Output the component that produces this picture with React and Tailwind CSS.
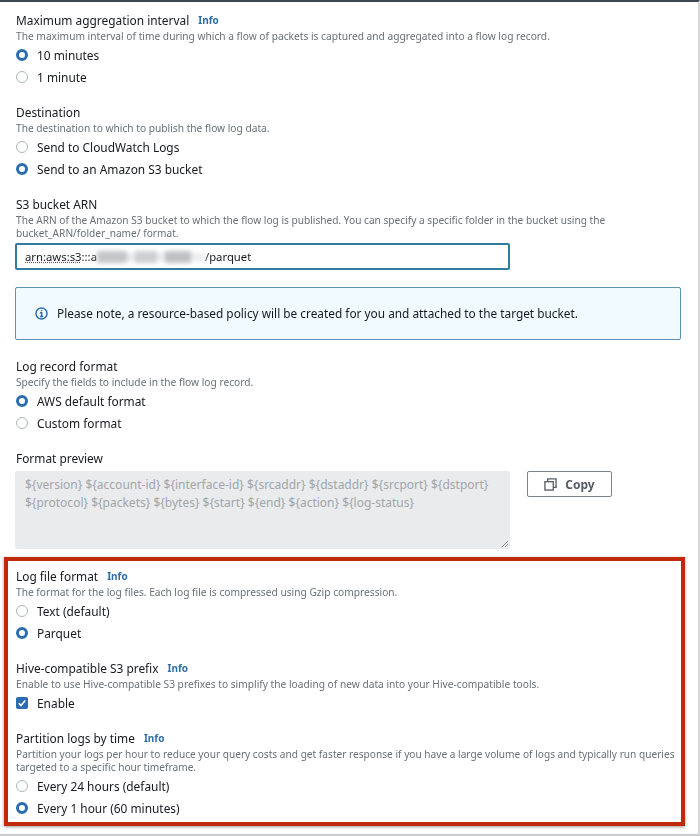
import React from "react";

const font = { fontFamily: '"Noto Sans", sans-serif' };

function Title({ children, info, className = "" }) {
  return (
    <div className={"flex items-center gap-[9px] h-4 text-[11.9px] leading-4 text-[#16191f] " + className}>
      <span>{children}</span>
      {info && <span className="text-[10px] font-bold text-[#2f6fa8]">Info</span>}
    </div>
  );
}

function Desc({ children }) {
  return <div className="h-4 text-[10.2px] leading-4 text-[#687078]">{children}</div>;
}

function Desc2({ a, b }) {
  return (
    <div className="py-[1.5px] text-[10.15px] leading-[13px] text-[#687078]">
      <div>{a}</div>
      <div>{b}</div>
    </div>
  );
}

function Radio({ label, checked }) {
  return (
    <div className="flex items-center h-[22px] text-[11.9px] text-[#16191f]">
      {checked ? (
        <span className="w-3 h-3 rounded-full border-[3.5px] border-[#2b6cb0] bg-white" />
      ) : (
        <span className="w-3 h-3 rounded-full border border-[#aab7b8] bg-white" />
      )}
      <span className="ml-[9px] pt-px">{label}</span>
    </div>
  );
}

export default function App() {
  return (
    <div
      style={font}
      className="w-[700px] h-[836px] bg-white border-t-2 border-t-[#3b4552] border-r-2 border-r-[#d5d7d9] border-b-2 border-b-[#c9cbcd] overflow-hidden"
    >
      <div className="blur-[0.35px]">
        <div className="pt-[10px] pl-4 pr-[17px]">
          <Title info>Maximum aggregation interval</Title>
          <Desc>The maximum interval of time during which a flow of packets is captured and aggregated into a flow log record.</Desc>
          <Radio checked label="10 minutes" />
          <Radio label="1 minute" />

          <Title className="mt-4">Destination</Title>
          <Desc>The destination to which to publish the flow log data.</Desc>
          <Radio label="Send to CloudWatch Logs" />
          <Radio checked label="Send to an Amazon S3 bucket" />

          <Title className="mt-4">S3 bucket ARN</Title>
          <Desc2
            a="The ARN of the Amazon S3 bucket to which the flow log is published. You can specify a specific folder in the bucket using the"
            b="bucket_ARN/folder_name/ format."
          />
          <div className="mt-[2px] -ml-px w-[495px] h-[27px] border-2 border-[#2f7c9e] rounded-[2px] flex items-center pl-2 pt-px text-[11.3px] text-[#16191f]">
            <span className="underline decoration-dotted decoration-[#d13212]">arn:aws:s3</span>
            <span>:::a</span>
            <span className="w-[108px] h-[15px] flex items-center blur-[2px]">
              <span className="w-[30px] h-3 bg-[#c4c6c8]" />
              <span className="w-[8px] h-2 bg-[#e8eaec]" />
              <span className="w-[22px] h-3 bg-[#cdcfd1]" />
              <span className="w-[8px] h-2 bg-[#e8eaec]" />
              <span className="w-[26px] h-3 bg-[#bfc1c3]" />
              <span className="w-[14px] h-2 bg-[#eceef0]" />
            </span>
            <span>/parquet</span>
          </div>

          <div className="mt-[17px] -ml-px w-[666px] h-[53px] border border-[#5f93ad] rounded-[2px] bg-[#f1faff] flex items-center pl-[19px] text-[11.85px] text-[#16191f]">
            <svg width="13" height="13" viewBox="0 0 16 16" fill="none" stroke="#2b6cb0" strokeWidth="1.8">
              <circle cx="8" cy="8" r="6.8" />
              <path d="M6.2 7.2H8.2V11.6M6.2 11.6H10" />
              <circle cx="8" cy="4.6" r="0.6" fill="#2b6cb0" strokeWidth="0.8" />
            </svg>
            <span className="ml-[9px]">Please note, a resource-based policy will be created for you and attached to the target bucket.</span>
          </div>

          <Title className="mt-[18px]">Log record format</Title>
          <Desc>Specify the fields to include in the flow log record.</Desc>
          <Radio checked label="AWS default format" />
          <Radio label="Custom format" />

          <Title className="mt-4">Format preview</Title>
          <div className="mt-[5px] -ml-px flex items-start">
            <div className="relative w-[495px] h-[78px] bg-[#eaebec] rounded-[2px] pl-[10px] pt-[5px] text-[12px] leading-[18px] text-[#a0a6ab]">
              <div>{"${version} ${account-id} ${interface-id} ${srcaddr} ${dstaddr} ${srcport} ${dstport}"}</div>
              <div>{"${protocol} ${packets} ${bytes} ${start} ${end} ${action} ${log-status}"}</div>
              <svg className="absolute right-[1px] bottom-[1px]" width="8" height="8" viewBox="0 0 8 8" stroke="#777" strokeWidth="0.8">
                <path d="M1 7L7 1M4 7L7 4" />
              </svg>
            </div>
            <div className="ml-[17px] w-[85px] h-[26px] border border-[#7d8388] rounded-[2px] bg-white flex items-center justify-center gap-[8px] pt-px text-[12px] font-bold text-[#545b64]">
              <svg width="13" height="13" viewBox="0 0 14 14" fill="none" stroke="#545b64" strokeWidth="1.4">
                <rect x="1" y="4" width="9" height="9" />
                <path d="M4 4V1H13V10H10" />
              </svg>
              <span>Copy</span>
            </div>
          </div>
        </div>

        <div className="mt-2 ml-1 w-[681px] h-[269px] border-4 border-[#c02a0b] shadow-[0_1px_3px_rgba(0,0,0,0.4)] pt-[7px] pl-2">
          <Title info>Log file format</Title>
          <Desc>The format for the log files. Each log file is compressed using Gzip compression.</Desc>
          <Radio label="Text (default)" />
          <Radio checked label="Parquet" />

          <Title info className="mt-4">Hive-compatible S3 prefix</Title>
          <Desc>Enable to use Hive-compatible S3 prefixes to simplify the loading of new data into your Hive-compatible tools.</Desc>
          <div className="flex items-center h-[22px] text-[11.9px] text-[#16191f]">
            <span className="w-3 h-3 rounded-[2px] bg-[#2b6cb0] flex items-center justify-center">
              <svg width="10" height="10" viewBox="0 0 10 10" fill="none" stroke="white" strokeWidth="1.6">
                <path d="M1.8 5.2L4 7.6L8.2 2.4" />
              </svg>
            </span>
            <span className="ml-[9px] pt-px">Enable</span>
          </div>

          <Title info className="mt-4">Partition logs by time</Title>
          <Desc2
            a="Partition your logs per hour to reduce your query costs and get faster response if you have a large volume of logs and typically run queries"
            b="targeted to a specific hour timeframe."
          />
          <Radio label="Every 24 hours (default)" />
          <Radio checked label="Every 1 hour (60 minutes)" />
        </div>
      </div>
    </div>
  );
}
